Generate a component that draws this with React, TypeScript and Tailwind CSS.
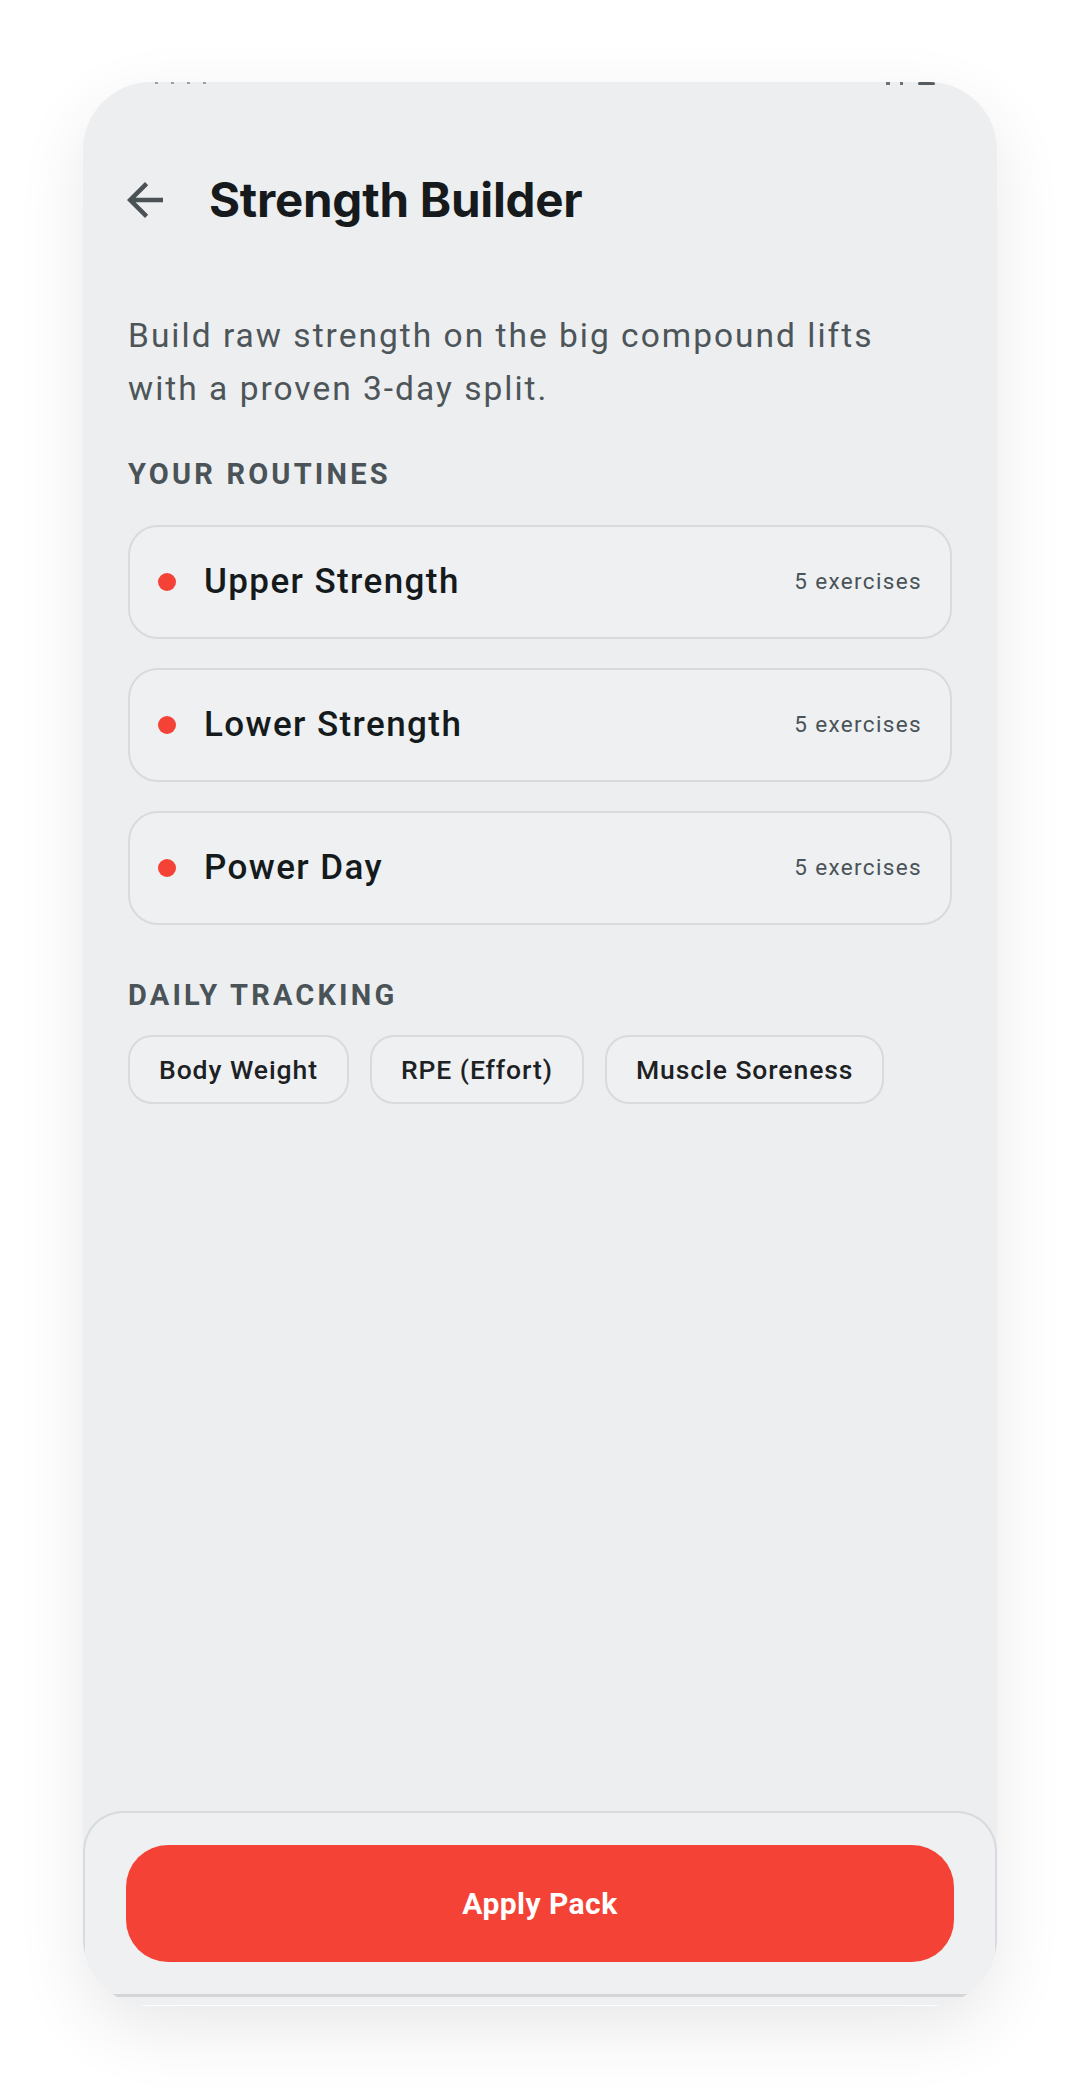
import React from "react";

const ROUTINES = [
  { name: "Upper Strength", count: 5 },
  { name: "Lower Strength", count: 5 },
  { name: "Power Day", count: 5 },
];

const TRACKING = ["Body Weight", "RPE (Effort)", "Muscle Soreness"];

function BackArrow() {
  return (
    <svg width="54" height="54" viewBox="0 0 24 24" fill="#4a5256">
      <path d="M20 11H7.83l5.59-5.59L12 4l-8 8 8 8 1.41-1.41L7.83 13H20v-2z" />
    </svg>
  );
}

export default function App() {
  return (
    <div
      className="w-[1080px] h-[2088px] bg-white pt-[82px] flex justify-center"
      style={{ fontFamily: "Roboto, 'Noto Sans', sans-serif" }}
    >
      <div className="w-[914px] h-[1924px] rounded-[68px] bg-[#eceef0] overflow-hidden flex flex-col shadow-[0_24px_70px_rgba(0,0,0,0.09)]">
        {/* clipped status bar remnants */}
        <div className="h-[3px] flex justify-between pl-[72px] pr-[62px]">
          <div className="flex gap-[13px]">
            <span className="w-[3px] h-[2px] bg-[#9aa0a4]" />
            <span className="w-[3px] h-[2px] bg-[#9aa0a4]" />
            <span className="w-[3px] h-[2px] bg-[#9aa0a4]" />
            <span className="w-[3px] h-[2px] bg-[#9aa0a4]" />
          </div>
          <div className="flex gap-[10px] items-start">
            <span className="w-[4px] h-[3px] bg-[#6b7175]" />
            <span className="w-[3px] h-[3px] bg-[#6b7175]" />
            <span className="ml-[5px] w-[17px] h-[3px] rounded-sm bg-[#555b5f]" />
          </div>
        </div>

        {/* header */}
        <div className="mt-[75px] h-[80px] flex items-center pl-[35px] gap-[37px]">
          <BackArrow />
          <h1
            className="text-[47.5px] leading-none font-bold text-[#161a1c] tracking-[-0.005em]"
            style={{ fontFamily: "Inter, 'Liberation Sans', sans-serif" }}
          >
            Strength Builder
          </h1>
        </div>

        <div className="px-[45px]">
          <p className="mt-[69px] text-[33.5px] leading-[53px] text-[#4d5559] tracking-[0.06em]">
            Build raw strength on the big compound lifts with a proven 3-day split.
          </p>

          <h2 className="mt-[42px] text-[29px] leading-[34px] font-bold text-[#4a5357] tracking-[0.11em]">
            YOUR ROUTINES
          </h2>

          <div className="mt-[34px] flex flex-col gap-[29px]">
            {ROUTINES.map((r) => (
              <div
                key={r.name}
                className="h-[114px] rounded-[30px] border-2 border-[#d8dbde] bg-[#eef0f2] flex items-center pl-[28px] pr-[28px]"
              >
                <span className="w-[18px] h-[18px] rounded-full bg-[#f44336] shrink-0" />
                <span className="ml-[28px] text-[35px] font-medium text-[#151a1c] tracking-[0.04em]">
                  {r.name}
                </span>
                <span className="ml-auto text-[22.5px] text-[#4a5357] tracking-[0.06em]">
                  {r.count} exercises
                </span>
              </div>
            ))}
          </div>

          <h2 className="mt-[53px] text-[29px] leading-[34px] font-bold text-[#4a5357] tracking-[0.11em]">
            DAILY TRACKING
          </h2>

          <div className="mt-[23px] flex gap-[21px]">
            {TRACKING.map((t) => (
              <div
                key={t}
                className="h-[69px] rounded-[24px] border-2 border-[#d8dbde] bg-[#eef0f2] flex items-center px-[29px] text-[26.5px] font-medium text-[#1d2124] tracking-[0.035em]"
              >
                {t}
              </div>
            ))}
          </div>
        </div>

        {/* bottom action sheet */}
        <div className="mt-auto rounded-t-[40px] border-t-2 border-x-2 border-b-[3px] border-[#d8dbde] border-b-[#d3d6d9] bg-[#eef0f2] pt-[32px] pb-[32px] px-[41px]">
          <button className="w-full h-[117px] rounded-[42px] bg-[#f44336] text-white text-[30px] font-bold tracking-[0.015em]">
            Apply Pack
          </button>
        </div>
        <div className="h-[9px] bg-[#eef0f2] border-b border-white" />
      </div>
    </div>
  );
}
